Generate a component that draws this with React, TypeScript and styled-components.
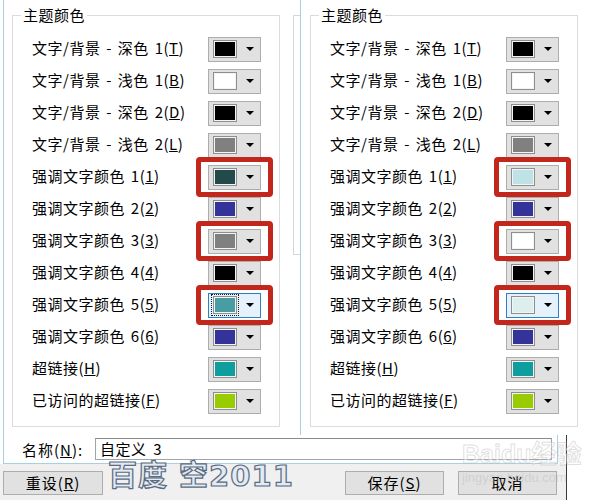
import React from 'react';
import styled, { createGlobalStyle, css } from 'styled-components';

type ButtonState = 'focus' | 'hover';

interface ColorRow {
  text: string;
  hotkey: string;
  color: string;
  marked?: boolean;
  state?: ButtonState;
}

const GlobalStyle = createGlobalStyle`
  html, body {
    margin: 0;
    padding: 0;
    background: #ffffff;
  }
  body {
    font-family: "Noto Sans CJK SC", "Liberation Sans", sans-serif;
    color: #000000;
  }
`;

const Window = styled.div`
  position: relative;
  width: 600px;
  height: 500px;
  overflow: hidden;
  background: #ffffff;
`;

const Panels = styled.div`
  display: flex;
  height: 435px;
  margin-left: 3px;
  border-left: 1px solid #a9d0e2;
`;

const LeftPane = styled.div`
  display: flex;
  width: 296px;
  border-right: 1px solid #a9d0e2;
`;

const RightPane = styled.div`
  display: flex;
  flex: 1;
`;

// leftover edge of the window behind the left shot
const GhostEdge = styled.div`
  width: 6px;
  height: 238px;
  margin: 15px 0 0 13px;
  border: 1px solid #d6d6d6;
  border-right: none;
`;

const GroupBox = styled.fieldset<{ $offset: number }>`
  box-sizing: border-box;
  width: 268px;
  height: 422px;
  min-width: 0;
  margin: 5px 0 0 ${({ $offset }) => $offset}px;
  padding: 8px 0 0 0;
  border: 1px solid #dcdcdc;
`;

const Legend = styled.legend`
  margin-left: 8px;
  padding: 0 2px;
  font-size: 15px;
  line-height: 20px;
  letter-spacing: 0.5px;
`;

const Row = styled.div`
  display: flex;
  align-items: center;
  height: 32px;
  padding: 0 18px 0 19px;
`;

const Label = styled.span`
  flex: 1;
  margin-top: -4px;
  font-size: 15px;
  letter-spacing: 0.5px;
  word-spacing: 2px;
  white-space: nowrap;
`;

const ColorButton = styled.div<{ $state?: ButtonState; $marked?: boolean }>`
  position: relative;
  box-sizing: border-box;
  display: flex;
  align-items: center;
  width: 53px;
  height: 25px;
  padding-left: 4px;
  background: #e1e1e1;
  border: 1px solid #adadad;

  ${({ $state }) =>
    $state &&
    css`
      background: #e5f1fb;
      border-color: #2f7fc1;
    `}

  ${({ $marked }) =>
    $marked &&
    css`
      &::after {
        content: '';
        position: absolute;
        top: -9px;
        bottom: -8px;
        left: -13px;
        right: -13px;
        border: 5px solid #c3261b;
        border-radius: 4px;
      }
    `}
`;

const Swatch = styled.div<{ $focus?: boolean }>`
  box-sizing: border-box;
  width: 24px;
  height: 18px;
  border: 1px solid #8e8e8e;
  box-shadow: inset 0 0 0 1px #f4f4f4;
  ${({ $focus }) =>
    $focus &&
    css`
      outline: 1px dotted #1a1a1a;
      outline-offset: 1px;
    `}
`;

const Arrow = styled.div`
  width: 0;
  height: 0;
  margin-left: 9px;
  border-left: 4px solid transparent;
  border-right: 4px solid transparent;
  border-top: 4px solid #000000;
`;

const Bottom = styled.div`
  box-sizing: border-box;
  width: 567px;
  height: 65px;
  border-right: 1px solid #3a3a3a;
`;

const NameRow = styled.div`
  box-sizing: border-box;
  display: flex;
  align-items: center;
  width: 555px;
  height: 29px;
  margin-left: 3px;
  padding-left: 18px;
  border: 1px solid #a9d0e2;
  border-top: none;
`;

const NameLabel = styled.span`
  width: 73px;
  font-size: 15px;
  letter-spacing: 1px;
`;

const NameInput = styled.div`
  box-sizing: border-box;
  width: 457px;
  height: 22px;
  padding-left: 4px;
  border: 1px solid #a3a3a3;
  border-top-color: #8a8a8a;
  font-size: 15px;
  line-height: 20px;
  letter-spacing: 0.5px;
  word-spacing: 3px;
`;

const ButtonBar = styled.div`
  box-sizing: border-box;
  display: flex;
  gap: 14px;
  height: 36px;
  padding: 7px 9px 0 3px;
  background: #f0f0f0;
`;

const Spacer = styled.div`
  flex: 1;
`;

const DialogButton = styled.div<{ $width: number }>`
  box-sizing: border-box;
  width: ${({ $width }) => $width}px;
  height: 24px;
  background: #e1e1e1;
  border: 1px solid #adadad;
  font-size: 15px;
  line-height: 21px;
  text-align: center;
  letter-spacing: 1px;
`;

const Stamp = styled.div`
  position: absolute;
  left: 108px;
  top: 457px;
  font-family: "DejaVu Sans", "Noto Sans CJK SC", sans-serif;
  font-size: 29px;
  font-weight: 700;
  line-height: 38px;
  letter-spacing: 1px;
  color: #e3eaf2;
  -webkit-text-stroke: 1.2px #5a6b82;
  pointer-events: none;
  white-space: nowrap;
`;

const BrandMark = styled.div`
  position: absolute;
  left: 462px;
  top: 438px;
  font-family: "Liberation Sans", "Noto Sans CJK SC", sans-serif;
  pointer-events: none;
  white-space: nowrap;
`;

const BrandName = styled.div`
  font-size: 25px;
  font-weight: 700;
  line-height: 32px;
  color: rgba(255, 255, 255, 0.4);
  -webkit-text-stroke: 1px rgba(185, 185, 185, 0.45);
`;

const BrandUrl = styled.div`
  font-size: 13px;
  line-height: 16px;
  color: rgba(175, 175, 175, 0.35);
`;

const labels: [string, string][] = [
  ['文字/背景 - 深色 1', 'T'],
  ['文字/背景 - 浅色 1', 'B'],
  ['文字/背景 - 深色 2', 'D'],
  ['文字/背景 - 浅色 2', 'L'],
  ['强调文字颜色 1', '1'],
  ['强调文字颜色 2', '2'],
  ['强调文字颜色 3', '3'],
  ['强调文字颜色 4', '4'],
  ['强调文字颜色 5', '5'],
  ['强调文字颜色 6', '6'],
  ['超链接', 'H'],
  ['已访问的超链接', 'F'],
];

const leftColors = [
  '#000000', '#ffffff', '#000000', '#808080', '#234a4b', '#333399',
  '#808080', '#000000', '#4a9ca3', '#333399', '#0e9e9e', '#99cc00',
];

const rightColors = [
  '#000000', '#ffffff', '#000000', '#808080', '#bde3e6', '#333399',
  '#ffffff', '#000000', '#ddeeee', '#333399', '#0e9e9e', '#99cc00',
];

const buildRows = (colors: string[], lastState: ButtonState): ColorRow[] =>
  labels.map(([text, hotkey], i) => ({
    text,
    hotkey,
    color: colors[i],
    marked: i === 4 || i === 6 || i === 8,
    state: i === 8 ? lastState : undefined,
  }));

const ThemeGroup: React.FC<{ rows: ColorRow[]; offset: number }> = ({ rows, offset }) => (
  <GroupBox $offset={offset}>
    <Legend>主题颜色</Legend>
    {rows.map((row) => (
      <Row key={row.text}>
        <Label>
          {row.text}(<u>{row.hotkey}</u>)
        </Label>
        <ColorButton $state={row.state} $marked={row.marked}>
          <Swatch $focus={row.state === 'focus'} style={{ background: row.color }} />
          <Arrow />
        </ColorButton>
      </Row>
    ))}
  </GroupBox>
);

const App: React.FC = () => {
  return (
    <Window>
      <GlobalStyle />
      <Panels>
        <LeftPane>
          <ThemeGroup rows={buildRows(leftColors, 'focus')} offset={8} />
          <GhostEdge />
        </LeftPane>
        <RightPane>
          <ThemeGroup rows={buildRows(rightColors, 'hover')} offset={9} />
        </RightPane>
      </Panels>
      <Bottom>
        <NameRow>
          <NameLabel>
            名称(<u>N</u>):
          </NameLabel>
          <NameInput>自定义 3</NameInput>
        </NameRow>
        <ButtonBar>
          <DialogButton $width={100}>
            重设(<u>R</u>)
          </DialogButton>
          <Spacer />
          <DialogButton $width={99}>
            保存(<u>S</u>)
          </DialogButton>
          <DialogButton $width={99}>取消</DialogButton>
        </ButtonBar>
      </Bottom>
      <Stamp>百度 空2011</Stamp>
      <BrandMark>
        <BrandName>Baidu经验</BrandName>
        <BrandUrl>jingyan.baidu.com</BrandUrl>
      </BrandMark>
    </Window>
  );
};

export default App;
